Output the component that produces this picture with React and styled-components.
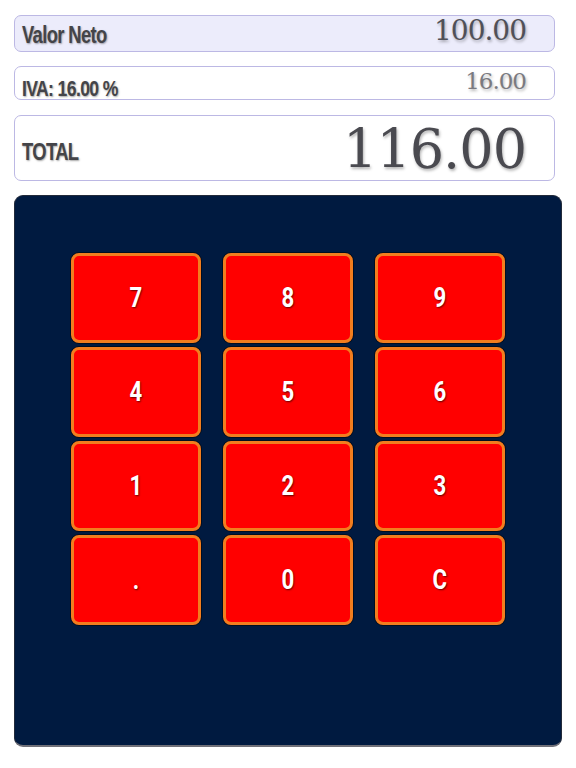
import React from 'react';
import styled, { createGlobalStyle } from 'styled-components';

const GlobalStyle = createGlobalStyle`
	html, body {
		margin: 0;
		padding: 0;
		background: #ffffff;
	}
	body {
		font-family: 'DejaVu Sans', sans-serif;
	}
`;

const Page = styled.div`
	width: 576px;
	height: 768px;
	box-sizing: border-box;
	padding: 15px 15px 0 14px;
	display: flex;
	flex-direction: column;
`;

const Field = styled.div`
	box-sizing: border-box;
	width: 541px;
	height: ${(props) => props.height}px;
	margin-bottom: ${(props) => props.gap}px;
	background: ${(props) => (props.tinted ? '#ececfb' : '#ffffff')};
	border: 1px solid #bcb8e4;
	border-radius: 7px;
	display: flex;
	align-items: ${(props) => props.align || 'flex-end'};
	justify-content: space-between;
	padding: 0 28px 0 7px;
`;

const Label = styled.span`
	display: inline-block;
	transform: scaleX(0.8);
	transform-origin: left center;
	font-family: 'Liberation Sans', 'DejaVu Sans', sans-serif;
	font-weight: bold;
	font-size: ${(props) => props.size}px;
	letter-spacing: -0.8px;
	color: #444448;
	text-shadow: 1px 1px 2px rgba(0, 0, 0, 0.35);
	line-height: 1;
	white-space: nowrap;
	margin-bottom: ${(props) => props.drop}px;
`;

const Amount = styled.span`
	font-family: 'DejaVu Serif', 'Liberation Serif', serif;
	font-size: ${(props) => props.size}px;
	color: ${(props) => props.color};
	text-shadow: 1px 2px 3px rgba(0, 0, 0, 0.3);
	line-height: 1;
	letter-spacing: -1px;
	margin-bottom: ${(props) => props.drop}px;
`;

const Keypad = styled.div`
	box-sizing: border-box;
	width: 548px;
	height: 552px;
	background: #001a40;
	border-radius: 9px;
	border: 1px solid #222a3a;
	border-bottom: 2px solid #707078;
	padding: 57px 0 0 56px;
`;

const Grid = styled.div`
	display: grid;
	grid-template-columns: repeat(3, 130px);
	grid-auto-rows: 90px;
	column-gap: 22px;
	row-gap: 4px;
`;

const Key = styled.button`
	box-sizing: border-box;
	background: #ff0000;
	border: 3px solid #f27d1e;
	border-radius: 8px;
	box-shadow: 0 0 0 1px rgba(0, 0, 0, 0.5);
	display: flex;
	align-items: center;
	justify-content: center;
	padding: 0;
	cursor: pointer;
`;

const KeyText = styled.span`
	display: inline-block;
	transform: scaleX(0.82);
	color: #ffffff;
	font-family: 'Roboto', 'DejaVu Sans', sans-serif;
	font-weight: bold;
	font-size: 27px;
	line-height: 1;
	text-shadow: 1px 1px 2px rgba(0, 0, 0, 0.6);
`;

const keys = ['7', '8', '9', '4', '5', '6', '1', '2', '3', '.', '0', 'C'];

export default function App() {
	return (
		<Page>
			<GlobalStyle />
			<Field height={37} gap={14} tinted>
				<Label size={23} drop={4}>Valor Neto</Label>
				<Amount size={28} color="#505058" drop={6}>100.00</Amount>
			</Field>
			<Field height={34} gap={15}>
				<Label size={22} drop={-1}>IVA: 16.00 %</Label>
				<Amount size={23} color="#7a7a80" drop={6}>16.00</Amount>
			</Field>
			<Field height={66} gap={14} align="center">
				<Label size={23} drop={-8}>TOTAL</Label>
				<Amount size={54} color="#4a4a50" drop={-4}>116.00</Amount>
			</Field>
			<Keypad>
				<Grid>
					{keys.map((k) => (
						<Key key={k}>
							<KeyText>{k}</KeyText>
						</Key>
					))}
				</Grid>
			</Keypad>
		</Page>
	);
}
